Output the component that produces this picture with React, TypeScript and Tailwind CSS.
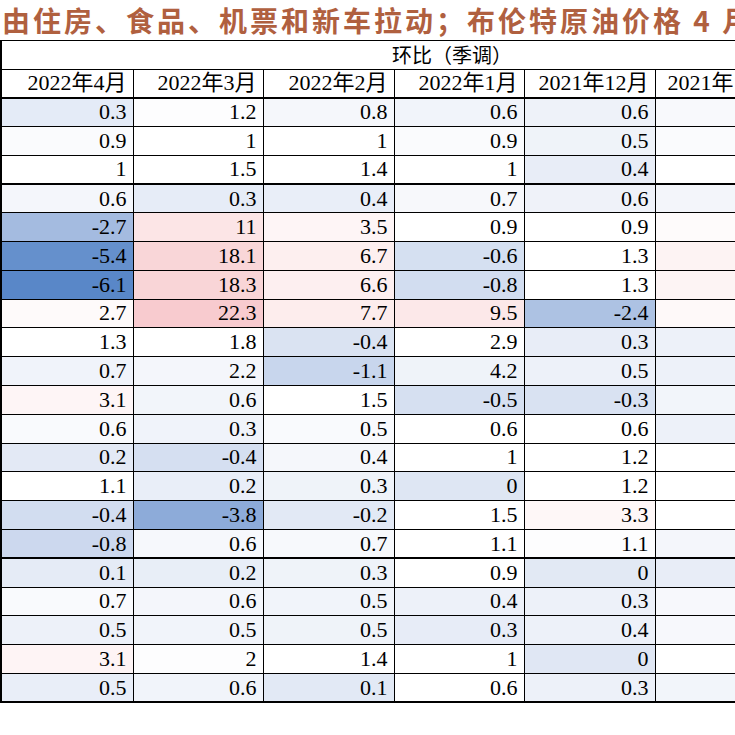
const serif = "font-['Liberation_Serif','Noto_Sans_CJK_SC',serif]";

const months = ["2022年4月", "2022年3月", "2022年2月", "2022年1月", "2021年12月", "2021年11月"];

type Cell = [string, string];

// each row: five visible values + the cropped sixth column (colour only)
const rows: Cell[][] = [
  [["0.3", "bg-[#e4ebf7]"], ["1.2", "bg-[#fdfdfe]"], ["0.8", "bg-[#f5f7fb]"], ["0.6", "bg-[#f1f4fa]"], ["0.6", "bg-[#eef2f9]"], ["", "bg-[#f8f9fc]"]],
  [["0.9", "bg-[#fafbfd]"], ["1", "bg-white"], ["1", "bg-white"], ["0.9", "bg-[#fafbfd]"], ["0.5", "bg-[#eff3f9]"], ["", "bg-[#fafbfd]"]],
  [["1", "bg-white"], ["1.5", "bg-white"], ["1.4", "bg-white"], ["1", "bg-white"], ["0.4", "bg-[#e8edf7]"], ["", "bg-white"]],
  [["0.6", "bg-[#f4f6fb]"], ["0.3", "bg-[#e6ecf7]"], ["0.4", "bg-[#e9eef8]"], ["0.7", "bg-[#f7f8fb]"], ["0.6", "bg-[#eff2f9]"], ["", "bg-[#f3f5fa]"]],
  [["-2.7", "bg-[#a4bbe0]"], ["11", "bg-[#fce5e6]"], ["3.5", "bg-[#fef5f6]"], ["0.9", "bg-white"], ["0.9", "bg-white"], ["", "bg-[#fefbfb]"]],
  [["-5.4", "bg-[#6590cc]"], ["18.1", "bg-[#f9d6d8]"], ["6.7", "bg-[#fdefef]"], ["-0.6", "bg-[#d5e0f1]"], ["1.3", "bg-white"], ["", "bg-[#fdf3f3]"]],
  [["-6.1", "bg-[#5987c8]"], ["18.3", "bg-[#f9d5d7]"], ["6.6", "bg-[#fdeff0]"], ["-0.8", "bg-[#d2ddf0]"], ["1.3", "bg-white"], ["", "bg-[#fdf4f4]"]],
  [["2.7", "bg-[#fefafa]"], ["22.3", "bg-[#f8cbcf]"], ["7.7", "bg-[#fdeded]"], ["9.5", "bg-[#fce8e9]"], ["-2.4", "bg-[#adc2e3]"], ["", "bg-[#fef9f9]"]],
  [["1.3", "bg-white"], ["1.8", "bg-white"], ["-0.4", "bg-[#dae3f2]"], ["2.9", "bg-white"], ["0.3", "bg-[#e8edf7]"], ["", "bg-[#edf1f9]"]],
  [["0.7", "bg-[#f0f3fa]"], ["2.2", "bg-[#f4f6fb]"], ["-1.1", "bg-[#c8d6ed]"], ["4.2", "bg-[#eff3f9]"], ["0.5", "bg-[#edf1f9]"], ["", "bg-[#edf1f9]"]],
  [["3.1", "bg-[#fef5f6]"], ["0.6", "bg-[#f2f5fa]"], ["1.5", "bg-white"], ["-0.5", "bg-[#d6e0f1]"], ["-0.3", "bg-[#d9e2f2]"], ["", "bg-[#f2f5fa]"]],
  [["0.6", "bg-[#f9fafd]"], ["0.3", "bg-[#f0f3fa]"], ["0.5", "bg-[#f9fafd]"], ["0.6", "bg-white"], ["0.6", "bg-white"], ["", "bg-[#edf1f9]"]],
  [["0.2", "bg-[#e3e9f5]"], ["-0.4", "bg-[#d5dff1]"], ["0.4", "bg-[#f5f7fb]"], ["1", "bg-white"], ["1.2", "bg-white"], ["", "bg-white"]],
  [["1.1", "bg-white"], ["0.2", "bg-[#e9eef8]"], ["0.3", "bg-[#eff3f9]"], ["0", "bg-[#dee6f3]"], ["1.2", "bg-white"], ["", "bg-white"]],
  [["-0.4", "bg-[#d2ddf0]"], ["-3.8", "bg-[#8dabd9]"], ["-0.2", "bg-[#e2e9f5]"], ["1.5", "bg-white"], ["3.3", "bg-[#fef7f7]"], ["", "bg-white"]],
  [["-0.8", "bg-[#ccd8ee]"], ["0.6", "bg-[#f6f8fc]"], ["0.7", "bg-[#f7f9fc]"], ["1.1", "bg-white"], ["1.1", "bg-[#fdfdfe]"], ["", "bg-[#f4f6fb]"]],
  [["0.1", "bg-[#e5ebf6]"], ["0.2", "bg-[#e8eef7]"], ["0.3", "bg-[#eff3f9]"], ["0.9", "bg-white"], ["0", "bg-[#e2e9f4]"], ["", "bg-[#e8edf7]"]],
  [["0.7", "bg-[#f9fafd]"], ["0.6", "bg-[#f4f6fb]"], ["0.5", "bg-[#f1f4fa]"], ["0.4", "bg-[#edf1f9]"], ["0.3", "bg-[#edf1f9]"], ["", "bg-[#f7f8fc]"]],
  [["0.5", "bg-[#edf1f9]"], ["0.5", "bg-[#f1f4fa]"], ["0.5", "bg-[#eff3f9]"], ["0.3", "bg-[#e7ecf7]"], ["0.4", "bg-[#edf1f9]"], ["", "bg-[#f7f8fc]"]],
  [["3.1", "bg-[#fef4f5]"], ["2", "bg-[#fdfdfe]"], ["1.4", "bg-white"], ["1", "bg-white"], ["0", "bg-[#e0e7f4]"], ["", "bg-white"]],
  [["0.5", "bg-[#e9eef8]"], ["0.6", "bg-[#f1f4fa]"], ["0.1", "bg-[#e2e9f5]"], ["0.6", "bg-white"], ["0.3", "bg-[#edf1f9]"], ["", "bg-[#f2f5fa]"]],
];

// rows after which a heavier rule is drawn
const thick = new Set([2, 15, 20]);

export default function App() {
  return (
    <div className="h-[735px] w-[735px] overflow-hidden bg-white">
      <h1 className="h-[40px] whitespace-nowrap pl-[2px] text-[28px] leading-[40px] font-bold tracking-[3px] text-[#b0603f] font-['Noto_Sans_CJK_SC',sans-serif]">
        由住房、食品、机票和新车拉动；布伦特原油价格 4 月
      </h1>

      <table className={`w-[860px] table-fixed border-collapse text-[22px] leading-none text-black ${serif}`}>
        <colgroup>
          <col className="w-[132px]" />
          <col className="w-[130px]" />
          <col className="w-[131px]" />
          <col className="w-[130px]" />
          <col className="w-[131px]" />
          <col className="w-[206px]" />
        </colgroup>
        <thead>
          <tr className="h-[29px]">
            <th
              colSpan={6}
              className="border-t border-b border-l-2 border-black pl-[390px] text-left align-middle text-[20px] font-normal font-['Noto_Sans_CJK_SC',sans-serif]"
            >
              环比（季调）
            </th>
          </tr>
          <tr className="h-[28px]">
            {months.map((m, i) => (
              <th
                key={m}
                className={`border-r border-b-2 border-black font-normal whitespace-nowrap ${i === 0 ? "border-l-2" : ""} ${i === 5 ? "pl-[12px] text-left" : "pr-[6px] text-right"}`}
              >
                {m}
              </th>
            ))}
          </tr>
        </thead>
        <tbody>
          {rows.map((row, r) => (
            <tr key={r} className="h-[28.8px]">
              {row.map(([v, bg], c) => (
                <td
                  key={c}
                  className={`border-r border-black pr-[6px] text-right align-middle ${bg} ${c === 0 ? "border-l-2" : ""} ${thick.has(r) ? "border-b-2" : "border-b"}`}
                >
                  {v}
                </td>
              ))}
            </tr>
          ))}
        </tbody>
      </table>
    </div>
  );
}
